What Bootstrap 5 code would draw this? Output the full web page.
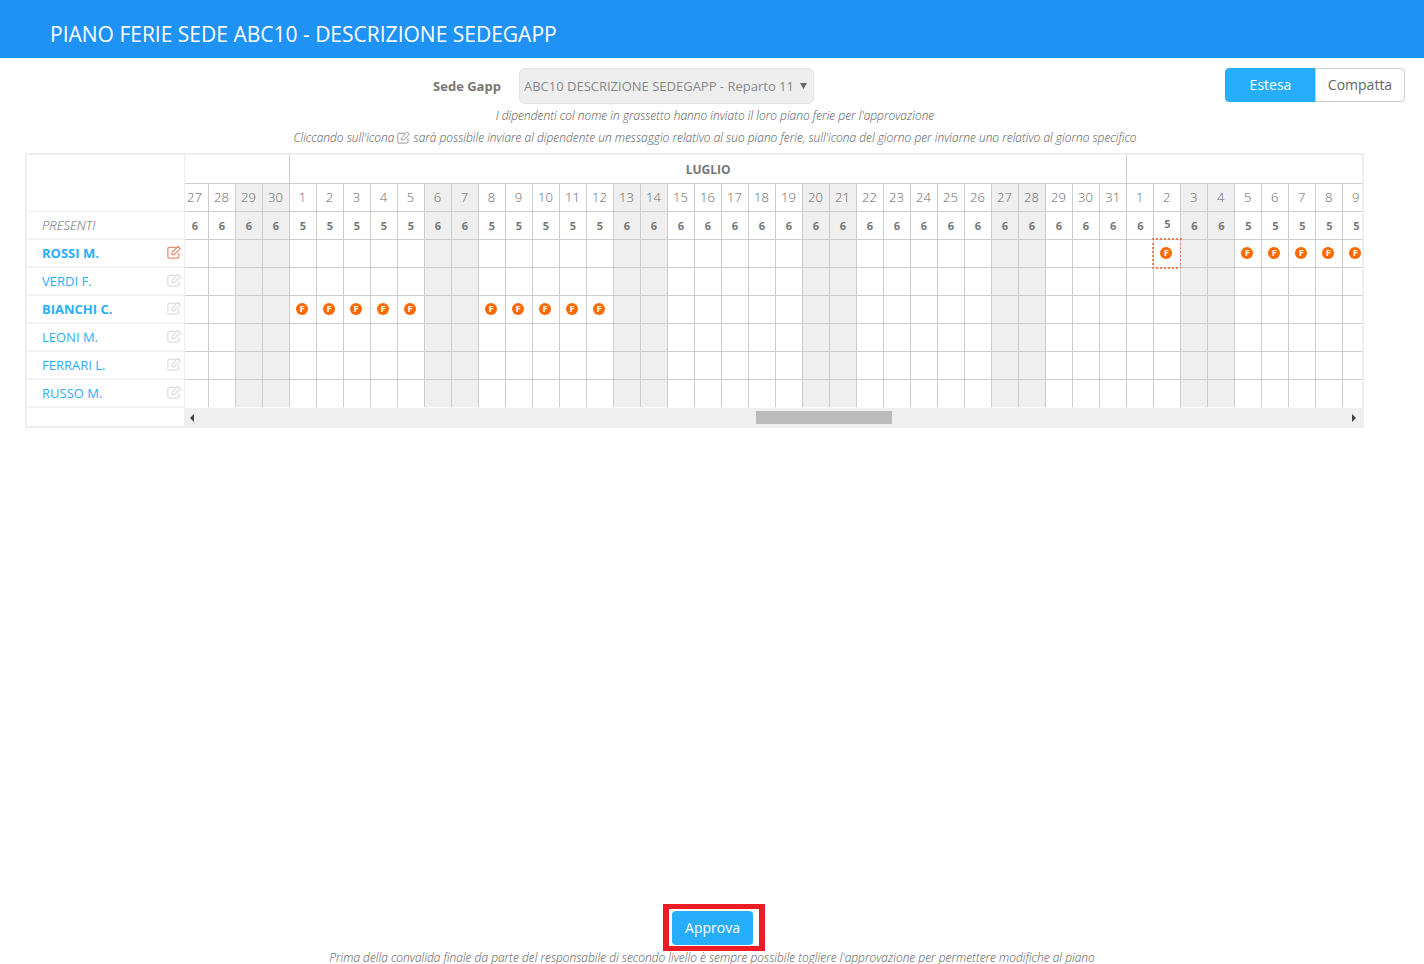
<!DOCTYPE html>
<html lang="it">
<head>
<meta charset="utf-8">
<title>Piano ferie</title>
<link href="https://cdn.jsdelivr.net/npm/bootstrap@5.3.0/dist/css/bootstrap.min.css" rel="stylesheet">
<style>
html,body{height:100%;}
body{font-family:"Open Sans",sans-serif;font-size:13px;color:#777;background:#fff;overflow:hidden;}
.pg{height:964px;}
.hdr{height:58px;background:#1e93f5;color:#fff;padding:21px 0 0 50px;font-size:21px;line-height:27px;}
.toprow{height:50px;padding:10px 177px 0 0;position:relative;}
.lbl{font-weight:700;color:#777;font-size:13px;margin-right:18px;line-height:36px;}
.sedesel{width:295px;height:36px;font-size:13px;font-family:inherit;padding:2px 4px 0;background-color:#eee;border:1px solid #e2e2e2;border-radius:6px;color:#888;opacity:1;background-image:url("data:image/svg+xml,%3Csvg xmlns='http://www.w3.org/2000/svg' width='7' height='7'%3E%3Cpath d='M0 1h7L3.5 7z' fill='%23666'/%3E%3C/svg%3E");background-repeat:no-repeat;background-position:right 6px top 13px;background-size:7px 7px;}
.sedesel:disabled{background-color:#eee;color:#888;}
.viewbtns{position:absolute;right:19px;top:10px;}
.viewbtns .btn{width:90px;height:34px;font-size:14px;line-height:20px;padding:6px 0;font-family:inherit;border-radius:4px;}
.viewbtns .btn.b-on{width:91px;}
.b-on{background:#26aefc;border:1px solid #26aefc;color:#fff;}
.b-off{background:#fff;border:1px solid #ccc;color:#666;}
.nota{font-style:italic;font-weight:300;font-size:11.95px;color:#555;text-align:center;line-height:16px;}
.n1,.n2{padding-left:6px;}
.n1{height:22px;}
.n2{height:23px;}
.ico{fill:none;stroke-width:1.4;stroke-linejoin:round;stroke-linecap:round;}
.nota .ico{width:13px;height:13px;stroke:#888;vertical-align:-2px;stroke-width:1.1;}
.planbox{margin:0 0 0 25px;width:1339px;height:275px;border:2px solid #eee;}
.nomi{width:158px;flex:none;border-right:1px solid #eee;}
.nomi .spc{height:57px;border-bottom:1px solid #eee;}
.nomi .rg{height:28px;border-bottom:2px solid #f1f1f1;padding:2px 3px 0 15px;display:flex;align-items:center;justify-content:space-between;color:#29aefc;}
.nomi .rg.pres{color:#666;font-style:italic;font-weight:300;font-size:13px;}
.nomi .rg b{font-weight:700;}
.nomi .ico{width:14px;height:14px;stroke:#dcdcdc;margin-top:-4px;}
.nomi .ico.act{stroke:#e58c70;}
.griglia{flex:1 1 auto;overflow:hidden;min-width:0;position:relative;}
.griglia table{border-collapse:separate;border-spacing:0;table-layout:fixed;width:1188px;margin-left:-3px;}
.griglia col{width:27px;}
.griglia td{height:28px;padding:0 2px 0 0;border-right:1px solid #ccc;border-bottom:1px solid #ccc;text-align:center;color:#777;vertical-align:middle;position:relative;}
.griglia tr.mes td{height:29px;padding:2px 0 0;font-weight:700;font-size:12px;color:#777;}
.griglia tr.gg td{font-weight:300;font-size:13px;color:#666;padding:0 1px 0 0;}
.griglia tr.pp td{font-weight:700;font-size:11px;padding:1px 0 0;}
.griglia tr:last-child td{height:27px;border-bottom:0;}
.griglia td.fest{background:#efefef;}
.griglia tr.pp td.up{padding:0 0 2px;}
.effe{display:block;width:12px;height:12px;line-height:12px;margin:-1px auto 0;border-radius:50%;background:#ff6a00;color:#fff;font-size:9.5px;font-weight:700;text-align:center;}
.griglia td.sel::after{content:"";position:absolute;left:-2px;top:-2px;right:-2px;bottom:-2px;border:2px dotted #e0835f;}
.barra{height:19px;margin-top:1px;background:#efefef;position:relative;}
.pollice{position:absolute;top:3px;height:13px;width:136px;background:#bbb;}
.fr{position:absolute;top:6px;width:0;height:0;border-top:4px solid transparent;border-bottom:4px solid transparent;}
.fr.l{left:5px;border-right:4px solid #444;}
.fr.r{right:6px;border-left:4px solid #444;}
.approva-area{text-align:center;}
.cornice{display:inline-block;border-style:solid;border-color:#ed1c24;border-width:5px 6px;padding:2px 6px 1px 3px;line-height:0;margin-left:4px;}
.btn-appr{width:81px;height:34px;background:#26aefc;border:0;color:#fff;border-radius:4px;font-size:14px;line-height:34px;padding:0;font-family:inherit;}
.pie{height:13px;line-height:13px;}
</style>
</head>
<body>
<div class="pg d-flex flex-column">
  <div class="hdr">PIANO FERIE SEDE ABC10 - DESCRIZIONE SEDEGAPP</div>
  <div class="toprow d-flex justify-content-center">
    <div class="d-flex">
      <span class="lbl">Sede Gapp</span>
      <select class="form-select sedesel" disabled><option>ABC10 DESCRIZIONE SEDEGAPP - Reparto 11</option></select>
    </div>
    <div class="btn-group viewbtns">
      <button type="button" class="btn b-on">Estesa</button>
      <button type="button" class="btn b-off">Compatta</button>
    </div>
  </div>
  <div class="nota n1">I dipendenti col nome in grassetto hanno inviato il loro piano ferie per l'approvazione</div>
  <div class="nota n2">Cliccando sull'icona <svg class="ico" viewBox="0 0 16 16"><path d="M13.5 9.5v4a1.4 1.4 0 0 1-1.4 1.4H2.4A1.4 1.4 0 0 1 1 13.5V4.1a1.4 1.4 0 0 1 1.4-1.4h7.1"/><path d="M5.8 8.3 12.6 1.5 15.2 4.1 8.4 10.9H5.8Z"/></svg> sarà possibile inviare al dipendente un messaggio relativo al suo piano ferie, sull'icona del giorno per inviarne uno relativo al giorno specifico</div>

  <div class="planbox d-flex">
    <div class="nomi" id="nomi"><div class="spc"></div></div>
    <div class="griglia">
      <table><colgroup id="colonne"></colgroup><tbody id="griglia"></tbody></table>
      <div class="barra"><span class="fr l"></span><div class="pollice" style="left:571px"></div><span class="fr r"></span></div>
    </div>
  </div>

  <div class="mt-auto approva-area">
    <div class="cornice"><button type="button" class="btn btn-appr">Approva</button></div>
    <div class="nota pie">Prima della convalida finale da parte del responsabile di secondo livello è sempre possibile togliere l'approvazione per permettere modifiche al piano</div>
  </div>
</div>
<script>
const ICON='<path d="M13.5 9.5v4a1.4 1.4 0 0 1-1.4 1.4H2.4A1.4 1.4 0 0 1 1 13.5V4.1a1.4 1.4 0 0 1 1.4-1.4h7.1"/><path d="M5.8 8.3 12.6 1.5 15.2 4.1 8.4 10.9H5.8Z"/>';
const persone=[["ROSSI M.",1,1],["VERDI F.",0,0],["BIANCHI C.",1,0],["LEONI M.",0,0],["FERRARI L.",0,0],["RUSSO M.",0,0]];
let n='<div class="rg pres">PRESENTI</div>';
persone.forEach(p=>{n+=`<div class="rg">${p[1]?'<b>'+p[0]+'</b>':p[0]}<svg class="ico${p[2]?' act':''}" viewBox="0 0 16 16">${ICON}</svg></div>`;});
document.getElementById('nomi').insertAdjacentHTML('beforeend',n);
const cols=[];
[27,28,29,30].forEach(d=>cols.push({m:6,d}));
for(let d=1;d<=31;d++)cols.push({m:7,d});
for(let d=1;d<=9;d++)cols.push({m:8,d});
document.getElementById('colonne').innerHTML=cols.map(()=>'<col>').join('');
const fest=c=>(c.m==6&&c.d>=29)||(c.m==7&&[6,7,13,14,20,21,27,28].includes(c.d))||(c.m==8&&[3,4].includes(c.d));
const ferie={0:c=>c.m==8&&[2,5,6,7,8,9].includes(c.d),2:c=>c.m==7&&[1,2,3,4,5,8,9,10,11,12].includes(c.d)};
const pres=c=>{if(fest(c))return 6;if(c.m==7&&c.d<=12)return 5;if(c.m==8&&c.d>=2)return 5;return 6;};
let h='<tr class="mes"><td colspan="4"></td><td colspan="31">LUGLIO</td><td colspan="9"></td></tr>';
const cl=c=>fest(c)?'fest':'';
h+='<tr class="gg">'+cols.map(c=>`<td class="${cl(c)}">${c.d}</td>`).join('')+'</tr>';
h+='<tr class="pp">'+cols.map(c=>`<td class="${cl(c)}${c.m==8&&c.d==2?' up':''}">${pres(c)}</td>`).join('')+'</tr>';
persone.forEach((p,i)=>{
  h+='<tr>'+cols.map(c=>{
    const f=ferie[i]&&ferie[i](c);
    const s=i==0&&c.m==8&&c.d==2;
    return `<td class="${cl(c)}${s?' sel':''}">${f?'<span class="effe">F</span>':''}</td>`;
  }).join('')+'</tr>';
});
document.getElementById('griglia').innerHTML=h;
</script>
</body>
</html>
